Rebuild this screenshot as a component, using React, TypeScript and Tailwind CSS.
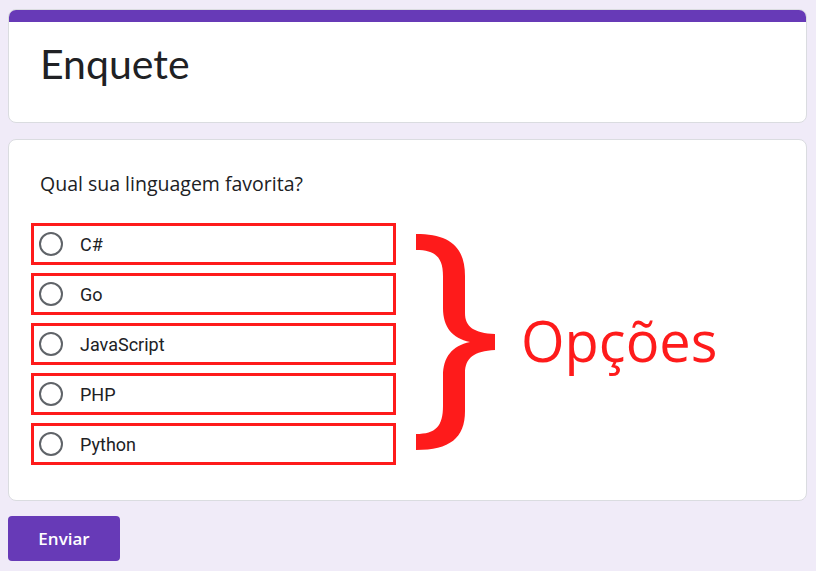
const options = ["C#", "Go", "JavaScript", "PHP", "Python"];

const Brace = () => (
  <svg width="100" height="230" viewBox="0 0 100 230" className="ml-[10px] shrink-0">
    <path
      d="M10,5 C44,5 59,18 59,47 L59,84 C59,98 68,104 89,105 L89,121 C68,122 59,129 59,144 L59,182 C59,209 44,221 10,221 L10,205 C30,205 37,197 37,177 L37,147 C37,128 46,117 64,113 C46,109 37,98 37,79 L37,47 C37,29 30,21 10,21 Z"
      fill="#fe1b1b"
    />
  </svg>
);

const App = () => {
  return (
    <div className="h-[571px] bg-[#f0ebf8] px-2 pt-[9px] font-['Lato',sans-serif] text-[#202124]">
      <div className="w-[799px] flex flex-col gap-4">
        <div className="rounded-lg border border-[#dadce0] bg-white overflow-hidden">
          <div className="h-3 bg-[#673ab7]" />
          <div className="px-[31px] pt-[18px] pb-[34px]">
            <h1 className="text-[41px] leading-[48px]">Enquete</h1>
          </div>
        </div>

        <div className="rounded-lg border border-[#dadce0] bg-white px-[22px] pt-8 pb-[35px]">
          <p className="ml-[9px] text-[19.5px] leading-6 font-['Open_Sans',sans-serif]">
            Qual sua linguagem favorita?
          </p>
          <div className="mt-[27px] flex items-center">
            <div className="w-[365px] flex flex-col gap-2 font-['Roboto',sans-serif]">
              {options.map((opt) => (
                <label
                  key={opt}
                  className="h-[42px] border-[3px] border-[#fe1b1b] flex items-center pl-[5px] gap-[17px]"
                >
                  <span className="w-6 h-6 rounded-full border-2 border-[#5f6368]" />
                  <span className="text-[18px]">{opt}</span>
                </label>
              ))}
            </div>
            <Brace />
            <span className="ml-[15px] mb-2 text-[56px] leading-[56px] text-[#fe1b1b] font-['Open_Sans',sans-serif]">
              Opções
            </span>
          </div>
        </div>

        <button className="-mt-px w-[112px] h-[45px] rounded-[4px] bg-[#673ab7] text-white font-semibold text-[17px] font-['Open_Sans',sans-serif]">
          Enviar
        </button>
      </div>
    </div>
  );
};

export default App;
